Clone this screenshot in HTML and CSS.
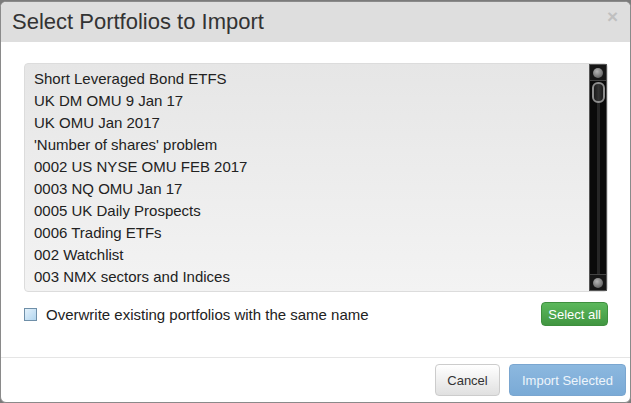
FILE: index.html
```html
<!DOCTYPE html>
<html>
<head>
<meta charset="utf-8">
<link rel="stylesheet" href="styles.css">
</head>
<body>
<div class="modal">
  <div class="modal-header">
    <h4 class="title">Select Portfolios to Import</h4>
    <span class="close">×</span>
  </div>
  <div class="modal-body">
    <div class="listbox">
      <ul class="items">
        <li>Short Leveraged Bond ETFS</li>
        <li>UK DM OMU 9 Jan 17</li>
        <li>UK OMU Jan 2017</li>
        <li>'Number of shares' problem</li>
        <li>0002 US NYSE OMU FEB 2017</li>
        <li>0003 NQ OMU Jan 17</li>
        <li>0005 UK Daily Prospects</li>
        <li>0006 Trading ETFs</li>
        <li>002 Watchlist</li>
        <li>003 NMX sectors and Indices</li>
      </ul>
      <div class="scrollbar">
        <div class="sb-btn"><span class="ball"></span></div>
        <div class="sb-track"><div class="sb-thumb"></div><div class="sb-line"></div></div>
        <div class="sb-btn"><span class="ball"></span></div>
      </div>
    </div>
    <div class="options">
      <label class="check"><span class="box"></span><span>Overwrite existing portfolios with the same name</span></label>
      <button class="btn btn-success">Select all</button>
    </div>
  </div>
  <div class="modal-footer">
    <button class="btn btn-default">Cancel</button>
    <button class="btn btn-primary">Import Selected</button>
  </div>
</div>
</body>
</html>
```
FILE: styles.css
```css
html, body {
  margin: 0;
  padding: 0;
  width: 631px;
  height: 403px;
  background: #7b7b7b;
  font-family: "Liberation Sans", Arial, sans-serif;
  color: #333;
  overflow: hidden;
}
.modal {
  box-sizing: border-box;
  width: 631px;
  height: 402px;
  margin-top: 1px;
  background: #fff;
  border: 1px solid #8a8a8a;
  border-radius: 6px;
  overflow: hidden;
  display: flex;
  flex-direction: column;
}
.modal-header {
  background: #dedede;
  height: 40px;
  display: flex;
  align-items: center;
  justify-content: space-between;
  padding: 0 12px 0 11px;
  flex: none;
}
.title {
  margin: 0;
  font-size: 22px;
  font-weight: normal;
  color: #333;
}
.close {
  font-size: 19px;
  font-weight: bold;
  color: #c0c0c0;
  line-height: 1;
  margin-top: -12px;
}
.modal-body {
  padding: 21px 22px 0 23px;
  flex: 1;
}
.listbox {
  box-sizing: border-box;
  height: 229px;
  border: 1px solid #dcdcdc;
  border-radius: 4px;
  background: linear-gradient(#e6e6e6, #f3f3f3);
  display: flex;
  justify-content: space-between;
}
.items {
  list-style: none;
  margin: 0;
  padding: 4px 0 0 9px;
  font-size: 15px;
  line-height: 22px;
  color: #222;
}
.scrollbar {
  box-sizing: border-box;
  width: 18px;
  height: 227px;
  background: #0a0a0a;
  border: 1px solid #555;
  display: flex;
  flex-direction: column;
}
.sb-btn {
  height: 15px;
  flex: none;
  display: flex;
  align-items: center;
  justify-content: center;
  background: #161616;
  border-bottom: 1px solid #444;
}
.sb-btn:last-child {
  border-bottom: none;
  border-top: 1px solid #444;
}
.ball {
  width: 10px;
  height: 10px;
  border-radius: 50%;
  background: radial-gradient(circle at 40% 35%, #b5b5b5, #6a6a6a 70%);
}
.sb-track {
  flex: 1;
  display: flex;
  flex-direction: column;
  align-items: center;
}
.sb-thumb {
  box-sizing: border-box;
  width: 13px;
  height: 21px;
  margin-top: 1px;
  border: 2px solid #8c8c8c;
  border-radius: 6px;
  background: linear-gradient(90deg, #1a1a1a, #333 50%, #1a1a1a);
  flex: none;
}
.sb-line {
  flex: 1;
  width: 3px;
  background: #262626;
}
.options {
  display: flex;
  justify-content: space-between;
  align-items: center;
  margin-top: 10px;
}
.check {
  display: flex;
  align-items: center;
  font-size: 15px;
  color: #222;
}
.box {
  box-sizing: border-box;
  width: 13px;
  height: 13px;
  border: 1px solid #6f8fa8;
  background: linear-gradient(135deg, #e3f1fb, #b3d6ef);
  margin-right: 9px;
}
.btn {
  font-family: "Liberation Sans", Arial, sans-serif;
  cursor: pointer;
  border-radius: 4px;
  margin: 0;
}
.btn-success {
  height: 24px;
  padding: 0 6px;
  font-size: 13px;
  color: #fff;
  background: linear-gradient(#5cb85c, #419641);
  border: 1px solid #3e8f3e;
}
.modal-footer {
  flex: none;
  border-top: 1px solid #e5e5e5;
  height: 45px;
  box-sizing: border-box;
  display: flex;
  justify-content: flex-end;
  align-items: flex-start;
  gap: 9px;
  padding: 6px 4px 0 0;
}
.btn-default {
  height: 32px;
  width: 65px;
  font-size: 13px;
  color: #333;
  background: linear-gradient(#fff, #e0e0e0);
  border: 1px solid #ccc;
}
.btn-primary {
  height: 32px;
  width: 117px;
  font-size: 13px;
  color: #eef5fb;
  background: linear-gradient(#8cb8df, #7aaad6);
  border: 1px solid #7aa6d0;
}
```
